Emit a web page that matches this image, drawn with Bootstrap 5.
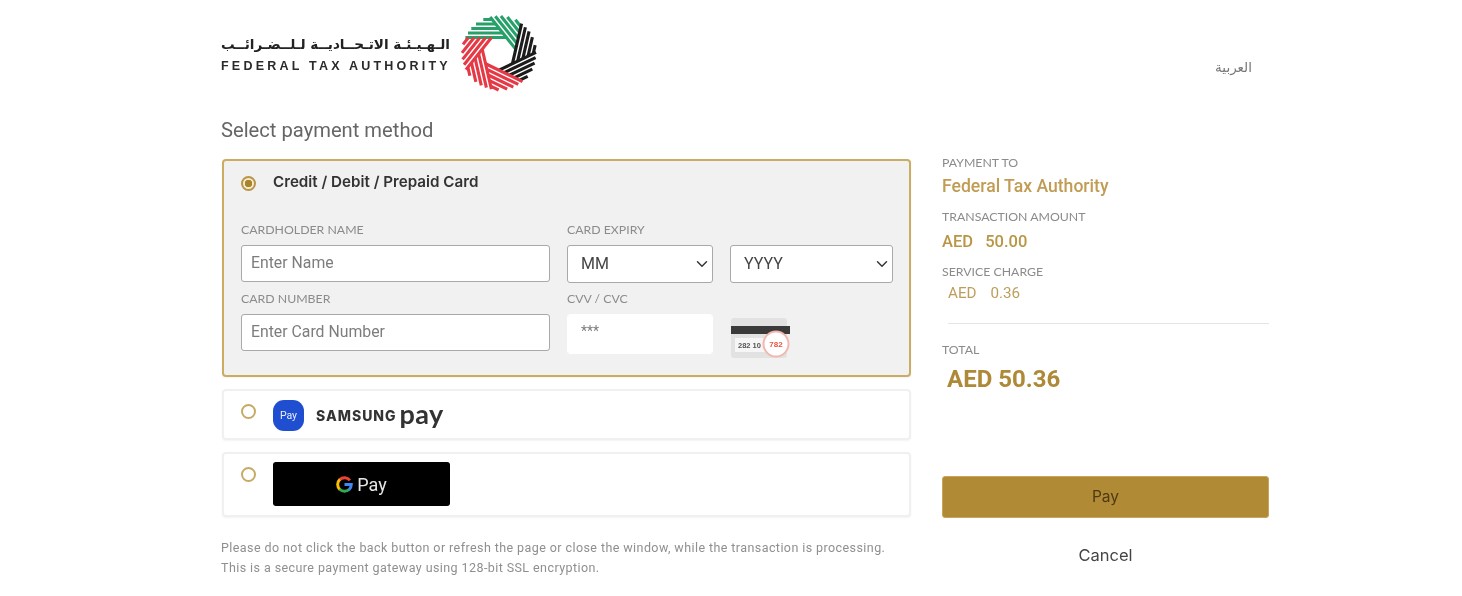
<!DOCTYPE html>
<html lang="en">
<head>
<meta charset="utf-8">
<title>Select payment method</title>
<link href="https://cdn.jsdelivr.net/npm/bootstrap@5.3.0/dist/css/bootstrap.min.css" rel="stylesheet">
<style>
body{font-family:"Roboto","Liberation Sans",sans-serif;background:#fff;color:#333;overflow:hidden}
.shell{width:1048px;margin-left:221px;filter:blur(.4px)}
.top-bar{height:91px;padding-top:14px}
.brand-ar{font-family:"DejaVu Sans",sans-serif;font-weight:700;font-size:13.6px;line-height:20px;color:#222;width:229px;white-space:nowrap;height:20px;overflow:visible}
.brand-en{font-family:"Liberation Sans",sans-serif;font-weight:700;font-size:12.5px;line-height:14px;letter-spacing:3.22px;color:#2a2a2a;white-space:nowrap;margin-top:5px}
.brand-text{padding-top:20px;width:239px}
.lang{font-family:"DejaVu Sans",sans-serif;font-size:13.5px;color:#777;margin:43px 17px 0 0;line-height:20px}
.page-title{font-size:20.2px;line-height:24px;color:#666;margin:27px 0 17px 0;font-weight:400}
.main-col{width:690px}
.side-col{width:327px;margin-left:31px;padding-top:65px}
.method{margin-left:1px;width:689px;border:2px solid #f0f0f0;border-radius:4px;background:#fff;box-shadow:0 1px 2px rgba(0,0,0,.05)}
.method-open{background:#f1f1f2;border-color:#cbac62;height:218px;margin-bottom:12px;padding:11px 17px 0 17px}
.method-samsung{height:51px;margin-bottom:12px;padding:9px 17px 0 17px}
.method-gpay{height:65px;padding:9px 17px 0 17px}
.pick{width:15px;height:15px;margin:0 17px 0 0;flex:none;border:2px solid #c5ab66;background-color:#fff;--bs-form-check-bg:#fff}
.pick:checked{border-color:#b8954a;background-color:#f6ecca;background-image:radial-gradient(circle,#a9842f 0 3.5px,transparent 4px)}
.pick:focus{box-shadow:none;border-color:#c5ab66}
.pick-on{margin-top:4px}
.pick-s{margin-top:-9px}
.pick-g{margin-top:4px}
.method-name{font-family:"Inter","Liberation Sans",sans-serif;font-weight:600;font-size:15.2px;line-height:20px;color:#333}
.fields{display:grid;grid-template-columns:309px 146px 163px;column-gap:17px;margin-top:31px}
.fld-label{font-family:"Lato","Liberation Sans",sans-serif;font-size:12.3px;line-height:14px;color:#8b8b8b;margin:0 0 8px 0;display:block;white-space:nowrap}
.fld{height:37px;border-radius:3px;border:1px solid #a9a9a9;font-size:15.8px;color:#333;padding:0 9px 3px;margin-bottom:9px;box-shadow:none}
.fld::placeholder{color:#7d7d7d}
.fld-sel{height:38px;padding:0 24px 0 13px;font-size:16px;color:#444;background-position:right 4px center;background-size:12px 12px}
.fld-cvv{border-color:#fff;height:40px;padding:0 13px 6px;font-size:14px}
.card-hint{width:60px;height:40px;display:block;margin:-6px 0 0 1px}
.sam-icon{width:31px;height:31px;border-radius:11px;background:#1f4fd0;color:#e8eeff;font-size:10.5px;line-height:31px;text-align:center;flex:none;margin-right:12px}
.sam-word{font-family:"Inter","Liberation Sans",sans-serif;font-weight:800;font-size:14px;letter-spacing:1px;color:#333;white-space:nowrap}
.sam-pay{font-family:"Lato","Liberation Sans",sans-serif;font-size:27px;line-height:27px;color:#333;margin-left:3px;letter-spacing:.4px;font-weight:700;position:relative;top:-2px}
.gpay-mark{width:177px;height:44px;background:#000;border-radius:3px;color:#e6e6e6;font-size:18px;flex:none;margin-top:-1px}
.gpay-g{width:17px;height:17px;margin-right:4px}
.fine-print{font-size:12.5px;line-height:20px;color:#8f8f8f;margin:21px 0 0 0;letter-spacing:.42px;white-space:nowrap}
.sum-label{font-family:"Lato","Liberation Sans",sans-serif;font-size:12.3px;line-height:14px;color:#8b8b8b;margin:0;white-space:nowrap}
.sum-name{font-size:17.6px;line-height:24px;font-weight:500;color:#c09c54;margin:4px 0 12px 0}
.sum-amt{font-size:16.5px;line-height:22px;font-weight:500;color:#b99645;margin:7px 0 12px 0;white-space:pre;word-spacing:2px}
.sum-fee{font-size:15.2px;line-height:20px;color:#bc9e5c;margin:4px 0 0 6px;white-space:pre;word-spacing:3.2px}
.sum-rule{margin:20px 0 19px 6px;border:0;border-top:1px solid #e4e4e4;opacity:1}
.sum-total{font-size:24px;line-height:30px;font-weight:700;color:#ae8a38;margin:7px 0 0 5px}
.pay-btn{background:#b18a36;border:1px solid #c7a65c;height:42px;width:100%;margin-top:82px;color:#4d3a12;font-size:15.5px;border-radius:3px;font-family:"Inter","Liberation Sans",sans-serif}
.pay-btn:hover{background:#b18a36;color:#4d3a12}
.cancel-btn{display:block;width:100%;text-align:center;color:#444;font-size:16.5px;line-height:24px;margin-top:25px;font-family:"Inter","Liberation Sans",sans-serif;background:none;border:0;padding:0}
</style>
</head>
<body>
<div class="shell">
  <header class="top-bar d-flex justify-content-between">
    <div class="d-flex">
      <div class="brand-text">
        <div class="brand-ar" dir="rtl" lang="ar">الـهـيـئـة الاتـحــاديــة لـلــضـرائــب</div>
        <div class="brand-en">FEDERAL TAX AUTHORITY</div>
      </div>
      <svg width="78" height="78" viewBox="-39 -39 78 78" role="img" aria-label="Federal Tax Authority emblem">
        <defs>
          <path id="band" fill="none" stroke-width="3.1" d="M-33.6 -15.5H7.4M-31 -20H3.8M-27.7 -24.5H.2M-23 -29H-3.4M-15.7 -33.5H-6.9"/>
        </defs>
        <g stroke="#27a06a"><use href="#band"/></g>
        <g stroke="#27a06a" transform="rotate(51.43)"><use href="#band"/></g>
        <g stroke="#1c1c1c" transform="rotate(102.86)"><use href="#band"/></g>
        <g stroke="#1c1c1c" transform="rotate(154.29)"><use href="#band"/></g>
        <g stroke="#e63946" transform="rotate(205.71)"><use href="#band"/></g>
        <g stroke="#e63946" transform="rotate(257.14)"><use href="#band"/></g>
        <g stroke="#e63946" transform="rotate(308.57)"><use href="#band"/></g>
      </svg>
    </div>
    <div class="lang" dir="rtl" lang="ar">العربية</div>
  </header>

  <div class="d-flex">
    <main class="main-col">
      <h1 class="page-title">Select payment method</h1>

      <section class="method method-open">
        <div class="d-flex align-items-start">
          <input class="form-check-input pick pick-on" type="radio" name="method" checked aria-label="Credit / Debit / Prepaid Card">
          <div class="method-name">Credit / Debit / Prepaid Card</div>
        </div>
        <div class="fields">
          <div>
            <label class="fld-label">CARDHOLDER NAME</label>
            <input class="form-control fld" type="text" placeholder="Enter Name">
          </div>
          <div>
            <label class="fld-label">CARD EXPIRY</label>
            <select class="form-select fld fld-sel"><option>MM</option></select>
          </div>
          <div>
            <label class="fld-label">&nbsp;</label>
            <select class="form-select fld fld-sel"><option>YYYY</option></select>
          </div>
          <div>
            <label class="fld-label">CARD NUMBER</label>
            <input class="form-control fld" type="text" placeholder="Enter Card Number">
          </div>
          <div>
            <label class="fld-label">CVV / CVC</label>
            <input class="form-control fld fld-cvv" type="text" placeholder="***">
          </div>
          <div class="pt-3 mt-3">
            <svg class="card-hint" viewBox="0 0 60 40" role="img" aria-label="CVV location on card">
              <rect x="0" y="0" width="56" height="40" rx="3" fill="#e2e2e3"/>
              <rect x="0" y="8" width="59" height="8" fill="#3a3a3a"/>
              <rect x="4" y="20" width="40" height="14" fill="#f6f6f6"/>
              <text x="7" y="30" font-family="Liberation Sans, sans-serif" font-size="7.5" font-weight="700" fill="#555">282 10</text>
              <circle cx="45" cy="26" r="12.5" fill="#fff" stroke="#f2b8ae" stroke-width="2"/>
              <text x="45" y="29" text-anchor="middle" font-family="Liberation Sans, sans-serif" font-size="8" font-weight="700" fill="#e8553f">782</text>
            </svg>
          </div>
        </div>
      </section>

      <section class="method method-samsung d-flex align-items-start">
        <div class="d-flex align-items-center">
          <input class="form-check-input pick pick-s" type="radio" name="method" aria-label="Samsung Pay">
          <div class="sam-icon">Pay</div>
          <span class="sam-word">SAMSUNG</span><span class="sam-pay">pay</span>
        </div>
      </section>

      <section class="method method-gpay d-flex align-items-start">
        <div class="d-flex align-items-start">
          <input class="form-check-input pick pick-g" type="radio" name="method" aria-label="Google Pay">
          <div class="gpay-mark d-flex align-items-center justify-content-center">
            <svg class="gpay-g" viewBox="0 0 24 24" aria-hidden="true" fill="none" stroke-width="4.2">
              <path d="M19.6 6.2A9.6 9.6 0 0 0 5.2 5.2" stroke="#ea4335"/>
              <path d="M5.6 4.8A9.6 9.6 0 0 0 5.6 19.2" stroke="#fbbc04"/>
              <path d="M5.2 18.8A9.6 9.6 0 0 0 18.8 18.8" stroke="#34a853"/>
              <path d="M18.4 19.2A9.6 9.6 0 0 0 21.6 12H12" stroke="#4285f4"/>
            </svg>
            <span>Pay</span>
          </div>
        </div>
      </section>

      <p class="fine-print">Please do not click the back button or refresh the page or close the window, while the transaction is processing.<br>This is a secure payment gateway using 128-bit SSL encryption.</p>
    </main>

    <aside class="side-col">
      <p class="sum-label">PAYMENT TO</p>
      <p class="sum-name">Federal Tax Authority</p>
      <p class="sum-label">TRANSACTION AMOUNT</p>
      <p class="sum-amt">AED  50.00</p>
      <p class="sum-label">SERVICE CHARGE</p>
      <p class="sum-fee">AED  0.36</p>
      <hr class="sum-rule">
      <p class="sum-label">TOTAL</p>
      <p class="sum-total">AED 50.36</p>
      <button class="btn pay-btn" type="button">Pay</button>
      <button class="cancel-btn" type="button">Cancel</button>
    </aside>
  </div>
</div>
<script src="https://cdn.jsdelivr.net/npm/bootstrap@5.3.0/dist/js/bootstrap.bundle.min.js"></script>
</body>
</html>
